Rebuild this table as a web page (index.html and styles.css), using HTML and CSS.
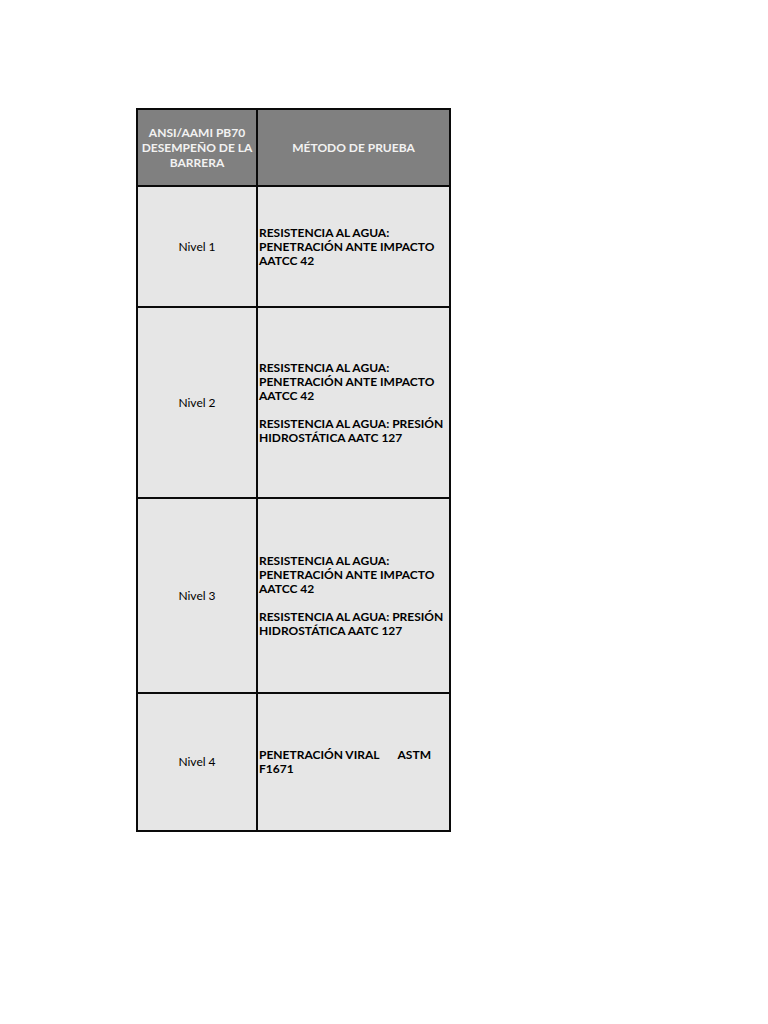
FILE: index.html
```html
<!DOCTYPE html>
<html lang="es">
<head>
<meta charset="utf-8">
<title>ANSI/AAMI PB70</title>
<link rel="stylesheet" href="styles.css">
</head>
<body>
<div class="page">
  <div class="grid">
    <div class="cell head">ANSI/AAMI PB70<br>DESEMPEÑO DE LA<br>BARRERA</div>
    <div class="cell head">MÉTODO DE PRUEBA</div>

    <div class="cell level">Nivel 1</div>
    <div class="cell method">
      <p>RESISTENCIA AL AGUA:<br>PENETRACIÓN ANTE IMPACTO<br>AATCC 42</p>
    </div>

    <div class="cell level">Nivel 2</div>
    <div class="cell method">
      <p>RESISTENCIA AL AGUA:<br>PENETRACIÓN ANTE IMPACTO<br>AATCC 42</p>
      <p>RESISTENCIA AL AGUA: PRESIÓN<br>HIDROSTÁTICA AATC 127</p>
    </div>

    <div class="cell level">Nivel 3</div>
    <div class="cell method">
      <p>RESISTENCIA AL AGUA:<br>PENETRACIÓN ANTE IMPACTO<br>AATCC 42</p>
      <p>RESISTENCIA AL AGUA: PRESIÓN<br>HIDROSTÁTICA AATC 127</p>
    </div>

    <div class="cell level">Nivel 4</div>
    <div class="cell method">
      <p class="spread"><span>PENETRACIÓN VIRAL</span><span>ASTM</span></p>
      <p class="tight">F1671</p>
    </div>
  </div>
</div>
</body>
</html>
```

FILE: styles.css
```css
html, body {
  margin: 0;
  padding: 0;
  background: #ffffff;
}

.page {
  padding: 108px 0 0 136px;
}

.grid {
  display: grid;
  grid-template-columns: 118px 191px;
  grid-template-rows: 75px 119px 189px 193px 136px;
  gap: 2px;
  padding: 2px;
  width: 311px;
  background: #0a0a0a;
  font-family: Lato, "Open Sans", "DejaVu Sans", sans-serif;
  font-size: 12px;
  line-height: 14px;
}

.cell {
  display: flex;
  flex-direction: column;
  justify-content: center;
  background: #e6e6e6;
  color: #111111;
}

.head {
  background: #808080;
  color: #f2f2f2;
  font-weight: 700;
  text-align: center;
  align-items: center;
  line-height: 15px;
}

.level {
  align-items: center;
  text-align: center;
  color: #000000;
}

.method {
  font-weight: 700;
  padding-left: 1px;
  color: #000000;
}

.method p {
  margin: 0;
}

.method p + p {
  margin-top: 14px;
}

.method p.spread {
  display: flex;
  justify-content: space-between;
  width: 172px;
  white-space: nowrap;
}

.method p.tight {
  margin-top: 0;
}
```
